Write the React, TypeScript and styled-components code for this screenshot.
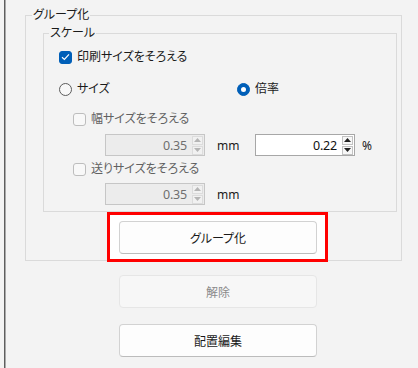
import React from 'react';
import styled, { createGlobalStyle } from 'styled-components';

const GlobalStyle = createGlobalStyle`
  html, body {
    margin: 0;
    padding: 0;
    background: #f3f3f3;
  }
  body {
    font-family: "Noto Sans", "Noto Sans CJK JP", sans-serif;
    font-size: 12px;
    font-feature-settings: "palt";
    color: #1a1a1a;
  }
`;

const Frame = styled.div`
  width: 412px;
  height: 368px;
  margin-left: 4px;
  border-left: 1px solid #5e5e5e;
  box-shadow: inset 1px 0 0 #a9a9a9;
  padding-left: 1px;
  box-sizing: border-box;
  overflow: hidden;
  display: flex;
  flex-direction: column;
`;

const GroupBox = styled.fieldset<{ $left: number; $width: number; $top: number }>`
  margin: ${(p) => p.$top}px 0 0 ${(p) => p.$left}px;
  width: ${(p) => p.$width}px;
  box-sizing: border-box;
  padding: 0;
  border: 1px solid #dadada;
  min-inline-size: 0;
`;

const Legend = styled.legend<{ $offset: number }>`
  margin-left: ${(p) => p.$offset}px;
  padding: 0 1px;
  line-height: 16px;
  font-size: 12px;
`;

const ScaleBody = styled.div`
  display: flex;
  flex-direction: column;
  padding: 8px 0 6px 0;
`;

const Row = styled.div<{ $indent: number; $gap: number; $h?: number }>`
  display: flex;
  align-items: center;
  height: ${(p) => p.$h ?? 16}px;
  margin-top: ${(p) => p.$gap}px;
  padding-left: ${(p) => p.$indent}px;
`;

const Option = styled.label<{ $width?: number; $disabled?: boolean }>`
  display: flex;
  align-items: center;
  gap: 5px;
  width: ${(p) => (p.$width ? `${p.$width}px` : 'auto')};
  line-height: 16px;
  color: ${(p) => (p.$disabled ? '#616161' : '#1a1a1a')};
`;

const Box = styled.span<{ $checked?: boolean; $disabled?: boolean }>`
  width: 13px;
  height: 13px;
  box-sizing: border-box;
  border-radius: 3px;
  display: inline-flex;
  align-items: center;
  justify-content: center;
  background: ${(p) => (p.$checked ? '#005fb8' : '#f8f8f8')};
  border: 1px solid ${(p) => (p.$checked ? '#005fb8' : p.$disabled ? '#bdbdbd' : '#8a8a8a')};
`;

const Radio = styled.span<{ $checked?: boolean }>`
  width: 13px;
  height: 13px;
  box-sizing: border-box;
  border-radius: 50%;
  display: inline-flex;
  align-items: center;
  justify-content: center;
  background: ${(p) => (p.$checked ? '#005fb8' : '#f8f8f8')};
  border: 1px solid ${(p) => (p.$checked ? '#005fb8' : '#5c5c5c')};
  &::after {
    content: '';
    display: ${(p) => (p.$checked ? 'block' : 'none')};
    width: 5px;
    height: 5px;
    border-radius: 50%;
    background: #ffffff;
  }
`;

const Spin = styled.div<{ $disabled?: boolean }>`
  width: 100px;
  height: 22px;
  box-sizing: border-box;
  display: flex;
  align-items: center;
  border: 1px solid ${(p) => (p.$disabled ? '#c6c6c6' : '#a7a7a7')};
  background: ${(p) => (p.$disabled ? '#ececec' : '#ffffff')};
  color: ${(p) => (p.$disabled ? '#6f6f6f' : '#111111')};
  padding-right: 1px;
`;

const SpinValue = styled.span`
  flex: 1;
  text-align: right;
  padding-right: 5px;
  font-size: 12.5px;
  letter-spacing: -0.2px;
`;

const Arrows = styled.div`
  display: flex;
  flex-direction: column;
  gap: 1px;
`;

const ArrowButton = styled.span<{ $disabled?: boolean }>`
  width: 11px;
  height: 9px;
  box-sizing: border-box;
  display: flex;
  align-items: center;
  justify-content: center;
  border: 1px solid ${(p) => (p.$disabled ? '#dcdcdc' : '#c2c2c2')};
  background: ${(p) => (p.$disabled ? '#f1f1f1' : '#f7f7f7')};
`;

const Unit = styled.span<{ $gap: number; $width?: number }>`
  margin-left: ${(p) => p.$gap}px;
  width: ${(p) => (p.$width ? `${p.$width}px` : 'auto')};
  color: #1a1a1a;
`;

const Highlight = styled.div`
  position: relative;
  margin: 0 0 -2px 81px;
  width: 221px;
  box-sizing: border-box;
  border: 3px solid #ff0000;
  background: #ffffff;
  padding: 6px 0 5px 9px;
`;

const Button = styled.button<{ $disabled?: boolean }>`
  width: 198px;
  height: 33px;
  box-sizing: border-box;
  border-radius: 4px;
  font: inherit;
  font-feature-settings: "palt";
  font-size: 12px;
  color: ${(p) => (p.$disabled ? '#8a8a8a' : '#1a1a1a')};
  background: ${(p) => (p.$disabled ? '#f7f7f7' : '#fdfdfd')};
  border: 1px solid ${(p) => (p.$disabled ? '#e6e6e6' : '#d2d2d2')};
  border-bottom-color: ${(p) => (p.$disabled ? '#e6e6e6' : '#bcbcbc')};
  padding: 0;
`;

const Actions = styled.div`
  display: flex;
  flex-direction: column;
  gap: 16px;
  margin: 14px 0 0 113px;
`;

const Check = () => (
  <svg width="9" height="8" viewBox="0 0 9 8">
    <path d="M1 4.2 L3.4 6.4 L8 1.4" fill="none" stroke="#ffffff" strokeWidth="1.2" />
  </svg>
);

const Triangle = ({ up, color }: { up?: boolean; color: string }) => (
  <svg width="7" height="4" viewBox="0 0 7 4">
    <path d={up ? 'M0 4 L3.5 0 L7 4 Z' : 'M0 0 L3.5 4 L7 0 Z'} fill={color} />
  </svg>
);

const SpinBox = ({ value, disabled }: { value: string; disabled?: boolean }) => {
  const color = disabled ? '#b5b5b5' : '#222222';
  return (
    <Spin $disabled={disabled}>
      <SpinValue>{value}</SpinValue>
      <Arrows>
        <ArrowButton $disabled={disabled}>
          <Triangle up color={color} />
        </ArrowButton>
        <ArrowButton $disabled={disabled}>
          <Triangle color={color} />
        </ArrowButton>
      </Arrows>
    </Spin>
  );
};

export default function App() {
  return (
    <>
      <GlobalStyle />
      <Frame>
        <GroupBox $left={19} $width={377} $top={7}>
          <Legend $offset={6}>グループ化</Legend>
          <GroupBox $left={17} $width={354} $top={2}>
            <Legend $offset={5}>スケール</Legend>
            <ScaleBody>
              <Row $indent={15} $gap={0}>
                <Option>
                  <Box $checked>
                    <Check />
                  </Box>
                  印刷サイズをそろえる
                </Option>
              </Row>
              <Row $indent={15} $gap={16}>
                <Option $width={178}>
                  <Radio />
                  サイズ
                </Option>
                <Option>
                  <Radio $checked />
                  倍率
                </Option>
              </Row>
              <Row $indent={29} $gap={14}>
                <Option $disabled>
                  <Box $disabled />
                  幅サイズをそろえる
                </Option>
              </Row>
              <Row $indent={61} $gap={7} $h={22}>
                <SpinBox value="0.35" disabled />
                <Unit $gap={12} $width={38}>mm</Unit>
                <SpinBox value="0.22" />
                <Unit $gap={7}>%</Unit>
              </Row>
              <Row $indent={29} $gap={5}>
                <Option $disabled>
                  <Box $disabled />
                  送りサイズをそろえる
                </Option>
              </Row>
              <Row $indent={61} $gap={6} $h={22}>
                <SpinBox value="0.35" disabled />
                <Unit $gap={12}>mm</Unit>
              </Row>
            </ScaleBody>
          </GroupBox>
          <Highlight>
            <Button>グループ化</Button>
          </Highlight>
        </GroupBox>
        <Actions>
          <Button $disabled>解除</Button>
          <Button>配置編集</Button>
        </Actions>
      </Frame>
    </>
  );
}
